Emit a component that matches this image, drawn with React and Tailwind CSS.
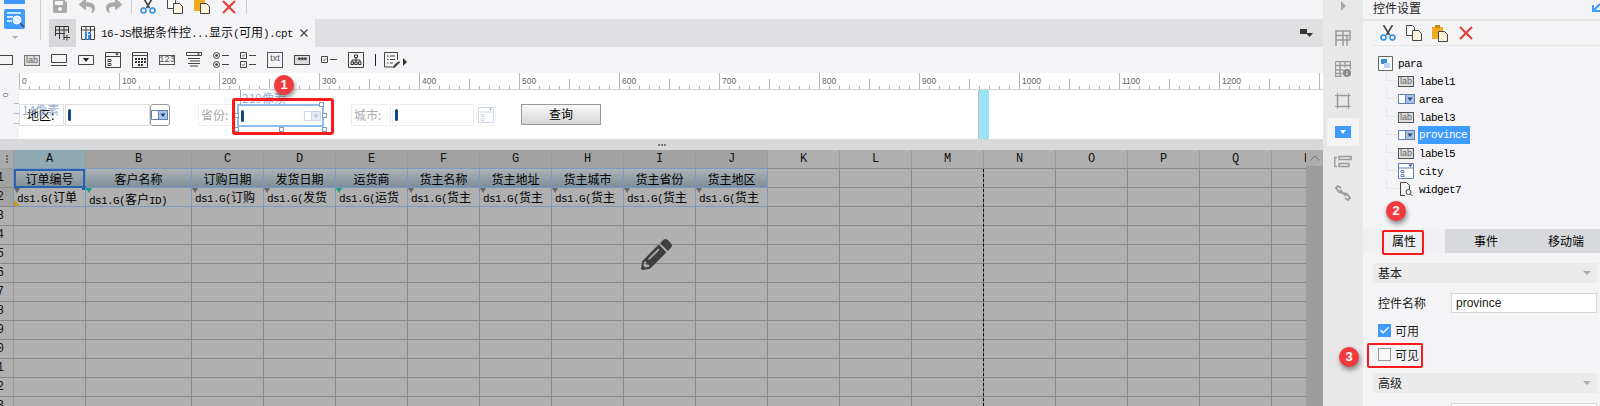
import { Check } from "lucide-react";
import { FaPencilAlt, FaReply, FaSave, FaShare } from "react-icons/fa";

const cols = "ABCDEFGHIJKLMNOPQ".split("").concat("R");
const heads = ["订单编号", "客户名称", "订购日期", "发货日期", "运货商", "货主名称", "货主地址", "货主城市", "货主省份", "货主地区"];
const fields = ["订单", "客户ID)", "订购日期)", "发货日期)", "运货商)", "货主名称)", "货主地址)", "货主城市)", "货主省份)", "货主地区)"];

// half-width latin next to 12px CJK, like the bitmap font in the designer
function M({ children, className = "" }) {
  const parts = String(children).split(/([\x00-\x7f]+)/).filter(Boolean);
  return (
    <span className={`font-['Noto_Sans_CJK_SC',sans-serif] text-[12px] ${className}`}>
      {parts.map((p, i) =>
        /^[\x00-\x7f]/.test(p) ? (
          <span key={i} className="font-['Liberation_Mono','Noto_Sans_CJK_SC',monospace] text-[11px] tracking-[-0.6px]">
            {p}
          </span>
        ) : (
          p
        )
      )}
    </span>
  );
}

function Cut() {
  return (
    <svg width="16" height="16" viewBox="0 0 16 16" fill="none">
      <path d="M3.5 0L9.5 10M12.5 0L6.5 10" stroke="#444" strokeWidth="1.6" />
      <circle cx="3.5" cy="12.5" r="2.5" stroke="#2e8ee6" strokeWidth="1.5" />
      <circle cx="12.5" cy="12.5" r="2.5" stroke="#2e8ee6" strokeWidth="1.5" />
    </svg>
  );
}

function Copy() {
  return (
    <svg width="16" height="16" viewBox="0 0 16 16" fill="none">
      <path d="M.5.5h6l2 2v8h-8z" fill="#fff" stroke="#444" />
      <path d="M6.5 5.5h6l3 3v7h-9z" fill="#fdf3dc" stroke="#444" />
    </svg>
  );
}

function Paste() {
  return (
    <svg width="16" height="17" viewBox="0 0 16 17" fill="none">
      <path d="M0 2h11v12H0z" fill="#f0aa20" />
      <path d="M3 0h5v3H3z" fill="#c98a10" />
      <path d="M6.5 6.5h6l3 3v7h-9z" fill="#fdf3dc" stroke="#444" />
    </svg>
  );
}

function Del() {
  return (
    <svg width="14" height="14" viewBox="0 0 14 14" fill="none">
      <path d="M1 1l12 12M13 1L1 13" stroke="#e8403a" strokeWidth="2.2" />
    </svg>
  );
}

function Lab({ c = "#555" }) {
  return (
    <span className="flex h-[11px] w-[16px] items-center justify-center border bg-[#ddd] font-['Liberation_Sans',sans-serif] text-[9px] leading-none text-[#666]" style={{ borderColor: c }}>
      lab
    </span>
  );
}

function Combo({ blue }) {
  return (
    <svg width="18" height="12" viewBox="0 0 18 12" fill="none">
      <path d="M.5 1.5h16v9H.5z" fill="#fff" stroke={blue ? "#5f7fae" : "#555"} />
      <path d="M7.5 1.5h9v9h-9z" fill={blue ? "#a9c3e8" : "#fff"} stroke={blue ? "#5f7fae" : "#555"} />
      <path d="M9.5 4.5h5L12 8z" fill={blue ? "#25407a" : "#333"} />
    </svg>
  );
}

function ComboTree() {
  return (
    <svg width="16" height="16" viewBox="0 0 16 16" fill="none">
      <path d="M.5.5h15v15H.5zM.5 5h15" fill="#fff" stroke="#5f7fae" />
      <path d="M10.5 1.5h4L12.5 4z" fill="#25407a" />
      <path d="M3 7.5h3v2H3zM3 11.5h3v2H3z" stroke="#5f7fae" />
    </svg>
  );
}

function WidgetBar() {
  const s = "#444";
  return (
    <div className="flex h-[26px] items-center bg-[#f4f4f6]">
      <span className="ml-[-4px] h-[10px] w-[17px] border border-[#444]" />
      <span className="ml-[11px]"><Lab c="#777" /></span>
      <svg className="ml-[11px]" width="16" height="12" viewBox="0 0 16 12" fill="none">
        <path d="M.5.5h15v8H.5zM0 11.5h16" stroke={s} />
      </svg>
      <svg className="ml-[11px]" width="16" height="10" viewBox="0 0 16 10" fill="none">
        <path d="M.5.5h15v9H.5z" stroke={s} />
        <path d="M5 3h6L8 7z" fill="#222" />
      </svg>
      <svg className="ml-[11px]" width="16" height="16" viewBox="0 0 16 16" fill="none">
        <path d="M.5.5h15v15H.5zM.5 4.5h15M3 7.5h3v2H3zM3 11.5h3v2H3z" stroke={s} />
        <path d="M10 1.5h4L12 3.5z" fill="#222" />
      </svg>
      <svg className="ml-[11px]" width="16" height="16" viewBox="0 0 16 16" fill="none">
        <path d="M.5.5h15v15H.5zM.5 3.5h15" stroke={s} />
        <path d="M3 6h2v2H3zM6 6h2v2H6zM9 6h2v2H9zM12 6h2v2h-2zM3 9h2v2H3zM6 9h2v2H6zM9 9h2v2H9zM12 9h2v2h-2zM6 12h2v2H6zM9 12h2v2H9z" fill="#333" />
      </svg>
      <span className="ml-[11px] flex h-[10px] w-[16px] items-center justify-center border border-[#555] font-['Liberation_Mono',monospace] text-[9px] leading-none text-[#555]">123</span>
      <svg className="ml-[11px]" width="16" height="16" viewBox="0 0 16 16" fill="none">
        <path d="M.5.5h15v3H.5zM2 6.5h12M4 9h10M2 11.5h12M4 14h8" stroke={s} />
        <path d="M11 1.5h3L12.5 3z" fill="#222" />
      </svg>
      <svg className="ml-[11px]" width="16" height="16" viewBox="0 0 16 16" fill="none">
        <circle cx="3.5" cy="3.5" r="3" stroke={s} />
        <circle cx="3.5" cy="12.5" r="3" stroke={s} />
        <circle cx="3.5" cy="3.5" r="1.3" fill="#333" />
        <circle cx="3.5" cy="12.5" r="1.3" fill="#333" />
        <path d="M9 3.5h7M9 12.5h7" stroke={s} />
      </svg>
      <svg className="ml-[11px]" width="16" height="16" viewBox="0 0 16 16" fill="none">
        <path d="M.5.5h6v6h-6zM.5 9.5h6v6h-6zM2 3.5l1 1 2-2M2 12.5l1 1 2-2M9 3.5h7M9 12.5h7" stroke={s} />
      </svg>
      <span className="ml-[11px] h-[16px] w-[16px] border border-[#555] text-center font-['Liberation_Sans',sans-serif] text-[9px] leading-[11px] text-[#555]">txt</span>
      <span className="ml-[11px] flex h-[10px] w-[16px] items-center justify-center border border-[#444] bg-[#ddd] font-['Liberation_Sans',sans-serif] text-[9px] font-bold leading-none tracking-[-0.5px] text-[#333]">***</span>
      <svg className="ml-[11px]" width="16" height="8" viewBox="0 0 16 8" fill="none">
        <path d="M.5.5h6v6h-6zM2 3.5l1 1 2-2M9 3.5h7" stroke={s} />
      </svg>
      <svg className="ml-[11px]" width="16" height="16" viewBox="0 0 16 16" fill="none">
        <path d="M.5.5h15v15H.5z" stroke={s} />
        <path d="M6.5 3h3v2.500h-3zM3 10h2.500v2.500H3zM6.700 10h2.500v2.500H6.700zM10.500 10H13v2.500h-2.500zM8 5.500v4.500M4 10V8h8v2" stroke="#333" />
      </svg>
      <span className="ml-[11px] h-[12px] w-px bg-[#222]" />
      <svg className="ml-[8px]" width="16" height="16" viewBox="0 0 16 16" fill="none">
        <path d="M11 15H.5V.5h13V8" stroke={s} />
        <path d="M3 4h1.500M6 4h5M3 7.500h1.500M6 7.500h5M3 11h1.500M6 11h3" stroke={s} />
        <path d="M9 16l1-3 5-4 1 1.500-4.500 4.500z" fill="#444" />
      </svg>
      <span className="ml-[3px] mt-[3px] h-0 w-0 border-y-[4px] border-l-[4px] border-y-transparent border-l-[#333]" />
    </div>
  );
}

function Ruler() {
  const ticks = [];
  for (let i = 0; i <= 1304; i += 10) {
    const h = i % 100 === 0 ? 16 : i % 50 === 0 ? 10 : 3;
    ticks.push(<path key={i} d={`M${i + 0.5} ${16 - h}V16`} stroke="#b5b5b5" />);
  }
  const labels = [];
  for (let i = 0; i <= 1200; i += 100) {
    labels.push(
      <text key={i} x={i + 3} y="11" fontSize="8.5" fill="#666" fontFamily="'Liberation Sans', sans-serif">
        {i}
      </text>
    );
  }
  return (
    <div className="flex h-[17px] bg-[#f4f4f6]">
      <div className="w-[19px]" />
      <svg className="bg-white" width="1304" height="17" viewBox="0 0 1304 17">
        {ticks}
        {labels}
        <path d="M0 16.500H1304" stroke="#d6d6d6" strokeWidth="1" />
      </svg>
    </div>
  );
}

function Handle({ className }) {
  return <span className={`absolute h-[5px] w-[5px] border border-[#7d9cc0] bg-white ${className}`} />;
}

function Caret() {
  return <span className="ml-[2px] mt-[4px] block h-[12px] w-[3px] rounded-sm bg-[#114a7f]" />;
}

function Canvas() {
  return (
    <div className="flex h-[49px] bg-[#f4f4f6]">
      <div className="relative w-[19px] shrink-0">
        <span className="absolute left-[3px] top-[-1px] rotate-90 font-['Liberation_Sans',sans-serif] text-[8px] text-[#666]">0</span>
        <span className="absolute left-[14px] top-[13px] h-px w-[5px] bg-[#bbb]" />
        <span className="absolute left-[14px] top-[23px] h-px w-[5px] bg-[#bbb]" />
        <span className="absolute left-[14px] top-[33px] h-px w-[5px] bg-[#bbb]" />
      </div>
      <div className="relative flex flex-1 items-start bg-white pt-[14px] font-['Noto_Sans_CJK_SC',sans-serif] text-[12px] leading-[20px]">
        <div className="relative h-[22px] w-[45px] border border-[#e0e0e0] pl-[7px] text-black">
          地区:
          <span className="absolute left-[2px] top-[-5px] text-[#7d9cc0]/80">14像素</span>
        </div>
        <div className="ml-px h-[22px] w-[85px] border border-[#ddd]"><Caret /></div>
        <div className="flex h-[22px] w-[20px] items-center justify-center rounded-[3px] border border-[#999]"><Combo blue /></div>
        <div className="ml-[28px] h-[22px] w-[38px] border border-[#eee] pl-[2px] text-[#aaa]">省份:</div>
        <div className="relative ml-px flex h-[23px] w-[87px] border-2 border-[#8fbcec]">
          <Caret />
          <span className="absolute right-0 top-0 flex h-[19px] w-[20px] items-center justify-center border-l border-[#eee] opacity-30"><Combo blue /></span>
          <span className="absolute left-[1px] top-[-16px] border-l border-[#9ab] pl-px leading-[15px] text-[#7d9cc0]/80">219像素</span>
          <Handle className="right-[-2px] top-[-4px]" />
          <Handle className="right-[-5px] top-[7px]" />
          <Handle className="bottom-[-7px] left-[40px]" />
          <Handle className="bottom-[-7px] right-[-5px]" />
          <Handle className="bottom-[-7px] left-[-5px]" />
          <Handle className="left-[-5px] top-[7px]" />
        </div>
        <div className="ml-[27px] h-[22px] w-[40px] border border-[#eee] pl-[2px] text-[#aaa]">城市:</div>
        <div className="ml-px h-[22px] w-[82px] border border-[#eee]"><Caret /></div>
        <div className="ml-[2px] flex h-[22px] w-[20px] items-center justify-center rounded-[3px] border border-[#ddd] opacity-30"><ComboTree /></div>
        <div className="ml-[25px] h-[21px] w-[80px] border border-[#999] bg-gradient-to-b from-[#f9f9f9] to-[#d6d6d6] text-center leading-[18px] text-black">查询</div>
        <div className="ml-[377px] mt-[-14px] h-[49px] w-[11px] border-l border-[#bbb] bg-[#9be3f3]" />
      </div>
    </div>
  );
}

function Sheet() {
  const rows = Array.from({ length: 13 }, (_, i) => i + 1);
  const mono = "font-['Liberation_Mono',monospace] text-[12px]";
  return (
    <div className="relative flex h-[256px] overflow-hidden">
      <div className="grid w-[1306px] shrink-0 grid-cols-[14px_72px_106px_repeat(16,72px)] auto-rows-[19px] content-start overflow-hidden bg-[#b0b0b0]">
        <div className="flex flex-col items-center justify-center gap-px border-b border-r border-[#999] bg-[#ababab]">
          <span className="h-[2px] w-[2px] bg-[#666]" />
          <span className="h-[2px] w-[2px] bg-[#666]" />
          <span className="h-[2px] w-[2px] bg-[#666]" />
        </div>
        {cols.map((c, i) => (
          <div
            key={c}
            className={`flex items-center justify-center overflow-hidden border-r text-[#111] ${mono} ${
              i === 0 ? "bg-[#90aab4]" : i < 10 ? "bg-[#a2a2a2]" : "bg-[#afafaf]"
            } ${i < 10 ? "border-b border-b-[#7a9bbf]" : "border-b border-b-[#888]"} border-r-[#999]`}
          >
            {c}
          </div>
        ))}
        {rows.map((r) => (
          <Row key={r} r={r} mono={mono} />
        ))}
      </div>
      <div className="absolute bottom-0 left-[983px] top-[19px] border-l border-dashed border-black" />
      <div className="w-[17px] bg-[#9c9c9c]">
        <div className="flex h-[16px] items-center justify-center bg-[#acacac]">
          <svg width="10" height="6" viewBox="0 0 10 6" fill="none">
            <path d="M.5 5.500L5 1l4.500 4.500" stroke="#777" />
          </svg>
        </div>
      </div>
      <FaPencilAlt className="absolute left-[641px] top-[89px] text-[#3f3f3f]" size={31} />
    </div>
  );
}

function Row({ r, mono }) {
  const num = (
    <div className={`flex items-center justify-end overflow-hidden border-b border-r pr-[9px] text-[#111] ${mono} ${r < 3 ? "border-r-[#7a9bbf] bg-[#a2a2a2]" : "border-r-[#999] bg-[#b0b0b0]"} border-b-[#888]`}>
      {r}
    </div>
  );
  if (r === 1) {
    return (
      <>
        {num}
        {cols.map((c, i) =>
          i < 10 ? (
            <div key={c} className="relative border-b border-r border-[#7a9bbf] bg-gradient-to-b from-[#aeb3b6] to-[#7e8e9a] text-center leading-[19px] font-['Noto_Sans_CJK_SC',sans-serif] text-[12px] text-black">
              {heads[i]}
              {i === 0 && (
                <>
                  <span className="absolute inset-x-0 bottom-[-1px] top-0 border-2 border-[#2a62b0]" />
                  <span className="absolute bottom-[-3px] right-[-2px] h-[4px] w-[5px] bg-[#2a62b0]" />
                </>
              )}
            </div>
          ) : (
            <div key={c} className="border-b border-r border-[#888]" />
          )
        )}
      </>
    );
  }
  if (r === 2) {
    return (
      <>
        {num}
        {cols.map((c, i) =>
          i < 10 ? (
            <div key={c} className={`relative overflow-hidden border-b border-r border-[#7a9bbf] pl-[3px] text-black leading-[16px] ${i === 1 ? "pt-[2px]" : ""}`}>
              <M>{`ds1.G(${fields[i]}`}</M>
              {i === 1 || i === 4 ? (
                <span className="absolute left-0 top-0 h-0 w-0 border-x-[3px] border-t-[5px] border-x-transparent border-t-[#16a085]" />
              ) : (
                <span className="absolute left-0 top-0 h-0 w-0 border-x-[3px] border-t-[5px] border-x-transparent border-t-[#666]" />
              )}
              {i === 0 && <span className="absolute bottom-0 left-0 h-0 w-0 border-b-[6px] border-r-[6px] border-b-[#c49a10] border-r-transparent" />}
            </div>
          ) : (
            <div key={c} className="border-b border-r border-[#888]" />
          )
        )}
      </>
    );
  }
  return (
    <>
      {num}
      {cols.map((c) => (
        <div key={c} className="border-b border-r border-[#888]" />
      ))}
    </>
  );
}

function SideBar() {
  const stroke = "#9a9a9a";
  return (
    <div className="flex w-[40px] shrink-0 flex-col items-center bg-[#e8e8e8]">
      <span className="mt-[1px] h-0 w-0 border-y-[5px] border-l-[5px] border-y-transparent border-l-[#aaa]" />
      <svg className="mt-[19px]" width="16" height="16" viewBox="0 0 16 16" fill="none">
        <path d="M1 1h14v9H1zM1 5.500h14M8 1v15M1 10v6M12 5.500V16" stroke={stroke} strokeWidth="1.500" />
      </svg>
      <svg className="mt-[15px]" width="16" height="16" viewBox="0 0 16 16" fill="none">
        <path d="M.5.5h15v8M.5.5v15h7M.5 4.500h15M.5 9h8M.5 12.500h7M5 .5v15M10 .5v6" stroke={stroke} strokeWidth="1.300" />
        <circle cx="12" cy="12" r="4" fill="#888" />
        <path d="M12 10v.8M12 11.500v2.500" stroke="#fff" />
      </svg>
      <svg className="mt-[16px]" width="16" height="16" viewBox="0 0 16 16" fill="none">
        <path d="M2.500 2.500h11v11h-11z" stroke={stroke} strokeWidth="1.500" />
        <path d="M0 2.500h3M13 2.500h3M0 13.500h3M13 13.500h3M2.500 0v3M13.500 0v3M2.500 13v3M13.500 13v3" stroke={stroke} />
      </svg>
      <div className="mt-[9px] flex h-[28px] w-[32px] items-center justify-center bg-[#f4f4f6]">
        <span className="flex h-[12px] w-[16px] items-center justify-center bg-[#3f9bff]">
          <span className="h-0 w-0 border-x-[3px] border-t-[4px] border-x-transparent border-t-white" />
        </span>
      </div>
      <svg className="mt-[9px]" width="18" height="14" viewBox="0 0 18 14" fill="none">
        <path d="M5 1.500h12v3H5zM5 8.500h10v3H5zM3 2.500H.8v9H3" stroke={stroke} strokeWidth="1.400" />
      </svg>
      <svg className="mt-[16px]" width="16" height="16" viewBox="0 0 16 16" fill="none">
        <path d="M6 3L3 1 1 3l3 4 3 1M10 13l3 2 2-2-3-4-3-1M5 5l6 6" stroke={stroke} strokeWidth="1.800" />
      </svg>
    </div>
  );
}

function TreeRow({ icon, children, selected }) {
  return (
    <div className="flex h-[18px] items-center">
      <span className="mb-[9px] h-[9px] w-[12px] border-b border-l border-[#e6e6e6]" />
      <span className="flex w-[20px]">{icon}</span>
      <M className={selected ? "flex h-[18px] w-[52px] items-center bg-[#3f9bff] pl-px text-white" : "pl-px text-black"}>{children}</M>
    </div>
  );
}

function Section({ children, className = "" }) {
  return (
    <div className={`ml-[10px] flex h-[20px] w-[224px] items-center justify-between bg-[#ebebec] pl-[5px] pr-[6px] ${className}`}>
      {children}
      <span className="h-0 w-0 border-x-[4px] border-t-[4px] border-x-transparent border-t-[#aaa]" />
    </div>
  );
}

function Panel() {
  return (
    <div className="flex flex-1 flex-col overflow-hidden bg-[#f4f4f6] font-['Noto_Sans_CJK_SC',sans-serif] text-[12px] leading-none text-[#222] [&>*]:shrink-0">
      <div className="relative flex h-[21px] items-center border-b-2 border-[#e4e4e4] pb-[3px] pl-[10px]">
        控件设置
        <svg className="absolute right-0 top-[3px]" width="8" height="9" viewBox="0 0 8 9" fill="none">
          <path d="M8 1L2 7M1 2v6h7" stroke="#3f9bff" strokeWidth="2" />
        </svg>
      </div>
      <div className="ml-[10px] flex h-[25px] items-center gap-[10px] border-b border-[#e4e4e4] pl-[7px]">
        <Cut />
        <Copy />
        <Paste />
        <span className="ml-[1px]"><Del /></span>
      </div>
      <div className="pl-[15px] pt-[8px]">
        <div className="flex h-[18px] items-center">
          <svg className="mr-[5px]" width="15" height="15" viewBox="0 0 15 15" fill="none">
            <path d="M.5.5h14v14H.5z" fill="#fff" stroke="#666" />
            <path d="M3 3h6v5H3z" fill="#3b8ed0" />
            <path d="M6 7h6v5H6z" fill="#b8d2f0" />
          </svg>
          <M className="text-black">para</M>
        </div>
        <div className="ml-[8px]">
          <TreeRow icon={<Lab />}>label1</TreeRow>
          <TreeRow icon={<Combo blue />}>area</TreeRow>
          <TreeRow icon={<Lab />}>label3</TreeRow>
          <TreeRow icon={<Combo blue />} selected>province</TreeRow>
          <TreeRow icon={<Lab />}>label5</TreeRow>
          <TreeRow icon={<ComboTree />}>city</TreeRow>
          <TreeRow
            icon={
              <svg className="ml-[2px]" width="13" height="14" viewBox="0 0 13 14" fill="none">
                <path d="M5 13.500H.5V.5h6l3 3v4" stroke="#444" />
                <circle cx="8.500" cy="10" r="2.500" stroke="#444" />
                <path d="M10.500 12l2 2" stroke="#444" />
              </svg>
            }
          >
            widget7
          </TreeRow>
        </div>
      </div>
      <div className="mt-[31px] flex h-[24px] items-center bg-[#d8d9dd] text-black">
        <div className="flex h-full w-[82px] items-center justify-center bg-[#f0f0f2]">属性</div>
        <div className="w-[82px] text-center">事件</div>
        <div className="flex-1 pl-[5px] text-center">移动端</div>
      </div>
      <Section className="mt-[10px]">基本</Section>
      <div className="ml-[15px] mt-[10px] flex h-[20px] items-center">
        <span className="w-[73px]">控件名称</span>
        <span className="flex h-[20px] w-[146px] items-center border border-[#d8d8d8] bg-white pl-[4px] font-['Liberation_Sans',sans-serif] text-[12px] text-[#222]">province</span>
      </div>
      <div className="ml-[15px] mt-[11px] flex h-[13px] items-center gap-[4px]">
        <span className="flex h-[13px] w-[13px] items-center justify-center bg-[#3f9bff]">
          <Check size={11} strokeWidth={3} className="text-white" />
        </span>
        可用
      </div>
      <div className="ml-[15px] mt-[11px] flex h-[13px] items-center gap-[4px]">
        <span className="h-[13px] w-[13px] border border-[#999] bg-[#f8f8f8]" />
        可见
      </div>
      <Section className="mt-[12px]">高级</Section>
      <div className="ml-[88px] mt-[10px] h-[20px] w-[146px] border border-[#d8d8d8] bg-white" />
    </div>
  );
}

function Badge({ n, className }) {
  return (
    <span className={`absolute flex h-[20px] w-[20px] items-center justify-center rounded-full bg-[#f03a3e] font-['Liberation_Sans',sans-serif] text-[13px] font-bold text-white shadow-[1px_3px_5px_rgba(0,0,0,0.45)] ${className}`}>
      {n}
    </span>
  );
}

export default function App() {
  return (
    <div className="relative flex h-[406px] w-[1600px] overflow-hidden bg-[#f4f4f6]">
      <div className="flex w-[1323px] shrink-0 flex-col">
        <div className="flex h-[47px]">
          <div className="relative w-[49px] shrink-0">
            <span className="absolute left-[4px] top-0 h-[4px] w-[21px] bg-[#3f9bff]" />
            <svg className="absolute left-[4px] top-[9px]" width="21" height="20" viewBox="0 0 21 20" fill="none">
              <rect width="21" height="20" rx="2" fill="#3f9bff" />
              <path d="M3 4h14M3 8h6M3 12h5" stroke="#fff" strokeWidth="1.500" />
              <circle cx="13" cy="11" r="4" fill="#dff0ff" stroke="#fff" />
              <path d="M16 14l4 4" stroke="#444" strokeWidth="1.500" />
            </svg>
            <span className="absolute left-[12px] top-[36px] h-0 w-0 border-x-[3px] border-t-[3px] border-x-transparent border-t-[#aaa]" />
            <span className="absolute left-[40px] top-0 h-[40px] w-px bg-[#ccc]" />
          </div>
          <div className="flex flex-1 flex-col">
            <div className="flex h-[19px] items-end overflow-hidden pb-[5px]">
              <FaSave className="ml-[3px] shrink-0 text-[#a9a9a9]" size={16} />
              <FaReply className="ml-[11px] shrink-0 text-[#a9a9a9]" size={16} />
              <FaShare className="ml-[11px] shrink-0 text-[#a9a9a9]" size={16} />
              <span className="ml-[9px] h-[19px] w-px shrink-0 bg-[#ccc]" />
              <span className="ml-[8px]"><Cut /></span>
              <span className="ml-[11px]"><Copy /></span>
              <span className="ml-[11px]"><Paste /></span>
              <span className="ml-[12px]"><Del /></span>
              <span className="ml-[10px] h-[19px] w-px shrink-0 bg-[#ccc]" />
            </div>
            <div className="flex h-[28px] items-center bg-[#dfdfe1]">
              <div className="flex h-full w-[27px] items-center justify-center bg-[#d8d8da]">
                <svg width="15" height="15" viewBox="0 0 15 15" fill="none">
                  <path d="M.5 10V.5h13V7M.5 4h13M.5 7.500h9M4.500.5V13M9 .5V14M9 11.500h6M12 9v5.500" stroke="#333" />
                </svg>
              </div>
              <div className="flex h-full w-[239px] items-center bg-[#f4f4f6] pl-[5px]">
                <svg width="14" height="14" viewBox="0 0 14 14" fill="none">
                  <path d="M.5.5h13v13H.5zM.5 4h13M5 .5v13M9.500.5v13" stroke="#444" />
                  <path d="M4 6h2v8H4zM7 6h3v2H7zM7 9h2v5H7z" fill="#2e8ee6" />
                </svg>
                <M className="ml-[6px] text-[#111]">16-JS根据条件控...显示(可用).cpt</M>
                <svg className="ml-[7px]" width="8" height="8" viewBox="0 0 8 8" fill="none">
                  <path d="M.5.5l7 7M7.500.5l-7 7" stroke="#444" strokeWidth="1.200" />
                </svg>
              </div>
              <svg className="ml-[985px]" width="13" height="9" viewBox="0 0 13 9" fill="none">
                <path d="M0 0h7v5H0z" fill="#333" />
                <path d="M6 4h7l-3.500 4z" fill="#333" />
              </svg>
            </div>
          </div>
        </div>
        <WidgetBar />
        <Ruler />
        <Canvas />
        <div className="flex h-[11px] items-center justify-center gap-px bg-[#d9d9dc]">
          <span className="h-[2px] w-[2px] bg-[#777]" />
          <span className="h-[2px] w-[2px] bg-[#777]" />
          <span className="h-[2px] w-[2px] bg-[#777]" />
        </div>
        <Sheet />
      </div>
      <SideBar />
      <Panel />

      <span className="absolute left-[232px] top-[98px] h-[37px] w-[102px] rounded-[3px] border-[3px] border-[#fb1b1b]" />
      <span className="absolute left-[1382px] top-[230px] h-[25px] w-[42px] rounded-[2px] border-[2px] border-[#fb1b1b]" />
      <span className="absolute left-[1367px] top-[343px] h-[25px] w-[56px] rounded-[2px] border-[2px] border-[#fb1b1b]" />
      <Badge n="1" className="left-[274px] top-[75px]" />
      <Badge n="2" className="left-[1386px] top-[201px]" />
      <Badge n="3" className="left-[1339px] top-[347px]" />
    </div>
  );
}
